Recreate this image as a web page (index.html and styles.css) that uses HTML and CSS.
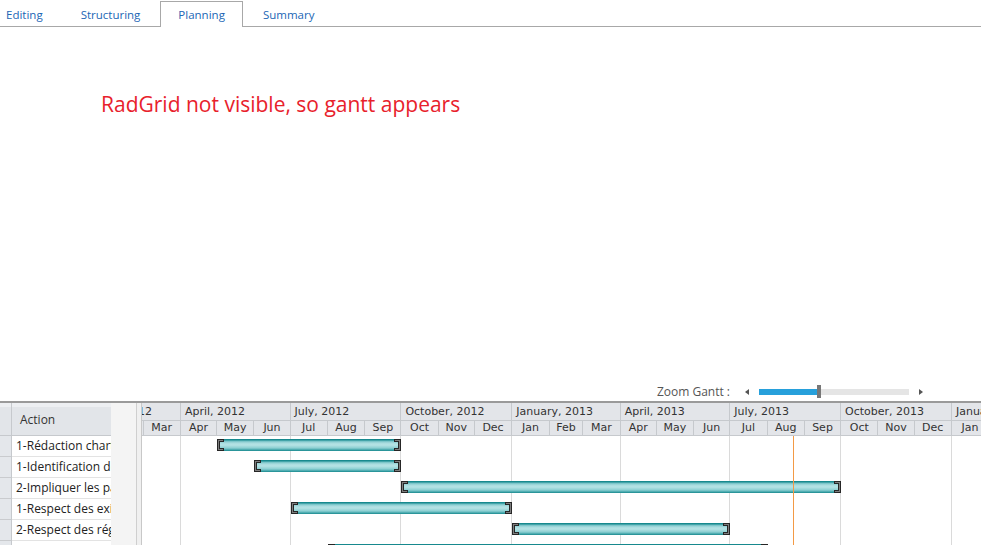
FILE: index.html
```html
<!DOCTYPE html>
<html lang="fr">
<head>
  <meta charset="UTF-8">
  <meta name="viewport" content="width=device-width, initial-scale=1.0">
  <title>Planning</title>
  <link rel="stylesheet" href="styles.css">
</head>
<body>
  <!-- Tabs -->
  <div class="tabstrip">
    <ul class="tabs">
      <li>Editing</li>
      <li>Structuring</li>
      <li class="active">Planning</li>
      <li>Summary</li>
    </ul>
  </div>

  <!-- Main Content -->
  <main class="content">
    <p class="notice">RadGrid not visible, so gantt appears</p>
  </main>

  <!-- Zoom slider -->
  <div class="zoom-bar">
    <span class="zoom-label">Zoom Gantt :</span>
    <span class="arrow arrow-left"></span>
    <div class="slider">
      <div class="slider-fill" style="width: 58px"></div>
      <div class="slider-thumb"></div>
    </div>
    <span class="arrow arrow-right"></span>
  </div>

  <!-- Gantt -->
  <div class="gantt">
    <div class="selector-col" id="selectorCol">
      <div class="grid-head"></div>
    </div>
    <div class="grid-col" id="gridCol">
      <div class="grid-head">Action</div>
    </div>
    <div class="splitter"></div>
    <div class="vscroll"></div>
    <div class="timeline">
      <div class="timeline-inner" id="timeline">
        <div class="tl-quarters" id="quarters"></div>
        <div class="tl-months" id="months"></div>
        <div class="tl-body">
          <div class="tl-cols" id="cols"></div>
          <div class="tl-rows" id="rows"></div>
          <div class="today" id="today"></div>
        </div>
      </div>
    </div>
  </div>

  <script src="gantt.js"></script>
</body>
</html>
```

FILE: styles.css
```css
* {
  box-sizing: border-box;
}
body {
  margin: 0;
  font-family: "Open Sans", "Noto Sans", sans-serif;
  background-color: #fff;
  height: 545px;
  overflow: hidden;
}

/* tabs */
.tabstrip {
  height: 27px;
  border-bottom: 1px solid #a8a8a8;
}
.tabs {
  display: flex;
  align-items: flex-end;
  list-style: none;
  margin: 0 0 0 -12px;
  padding: 0;
  height: 26px;
}
.tabs li {
  height: 26px;
  margin: 0 2px -1px 0;
  padding: 5px 17px 0;
  line-height: 16px;
  font-size: 11.5px;
  color: #2166b5;
  border: 1px solid transparent;
  border-bottom: none;
}
.tabs li.active {
  background-color: #fff;
  border-color: #a8a8a8;
}

/* content */
.content {
  height: 355px;
  padding: 63px 0 0 101px;
}
.notice {
  margin: 0;
  font-size: 21px;
  line-height: 28px;
  color: #e8212b;
}

/* zoom slider */
.zoom-bar {
  display: flex;
  justify-content: flex-end;
  align-items: center;
  height: 19px;
  padding-right: 58px;
}
.zoom-label {
  font-size: 12px;
  color: #555;
  margin-right: 15px;
}
.arrow {
  width: 0;
  height: 0;
  border-top: 3px solid transparent;
  border-bottom: 3px solid transparent;
}
.arrow-left {
  border-right: 4px solid #555;
  margin-right: 10px;
}
.arrow-right {
  border-left: 4px solid #555;
  margin-left: 10px;
}
.slider {
  display: flex;
  align-items: center;
  width: 150px;
  height: 6px;
  background-color: #e5e5e5;
}
.slider-fill {
  height: 6px;
  background-color: #27a0db;
}
.slider-thumb {
  width: 4px;
  height: 13px;
  background-color: #777;
}

/* gantt */
.gantt {
  display: flex;
  height: 150px;
  border-top: 2px solid #9a9a9a;
}
.grid-head {
  height: 33px;
  border-top: 4px solid #edeff2;
  border-bottom: 1px solid #c6c9cd;
  background-color: #e2e5e9;
}
.selector-col {
  width: 12px;
  background-color: #e4e7eb;
  border-right: 1px solid #c6c9cd;
}
.selector-col .cell {
  height: 21px;
  border-bottom: 1px solid #c9cbce;
}
.grid-col {
  width: 99px;
  overflow: hidden;
}
.grid-col .grid-head {
  padding-left: 8px;
  font-size: 12px;
  line-height: 26px;
  color: #333;
}
.grid-col .cell {
  height: 21px;
  padding-left: 4px;
  border-bottom: 1px solid #e3e3e3;
  font-size: 12px;
  line-height: 20px;
  color: #222;
  white-space: nowrap;
  overflow: hidden;
}
.splitter {
  width: 26px;
  background-color: #f4f4f4;
  border-right: 1px solid #cfcfcf;
}
.vscroll {
  width: 5px;
  background-color: #f0f0f0;
  border-right: 1px solid #c8c8c8;
}
.timeline {
  flex: 1;
  overflow: hidden;
}
.timeline-inner {
  margin-left: -70.7px;
  font-family: "DejaVu Sans", Verdana, sans-serif;
  font-size: 11px;
  color: #333;
}
.tl-quarters,
.tl-months {
  display: flex;
  background-color: #e3e5e9;
  border-bottom: 1px solid #c6c9cd;
  white-space: nowrap;
}
.tl-quarters {
  height: 18px;
}
.tl-months {
  height: 15px;
}
.tl-quarters div {
  flex: none;
  padding-left: 4px;
  line-height: 17px;
  border-right: 1px solid #c6c9cd;
  overflow: hidden;
}
.tl-months div {
  flex: none;
  text-align: center;
  line-height: 14px;
  border-right: 1px solid #c6c9cd;
  overflow: hidden;
}
.tl-body {
  display: grid;
  position: relative;
  height: 120px;
}
.tl-cols,
.tl-rows {
  grid-area: 1 / 1;
}
.tl-cols {
  display: flex;
}
.tl-cols div {
  flex: none;
  border-right: 1px solid #dadada;
}
.tl-row {
  height: 21px;
  padding-top: 3px;
}
.bar {
  position: relative;
  height: 12px;
  background: linear-gradient(to bottom, #17898e 0, #17898e 1px, #6fbfc3 2px, #a9dcdf 4px, #b6e3e5 6px, #8ccfd2 9px, #3ea3a8 11px, #17878c 12px);
}
.bar svg {
  position: absolute;
  top: 0;
}
.bar .cap-left {
  left: 0;
}
.bar .cap-right {
  right: 0;
}
.today {
  position: absolute;
  top: 0;
  bottom: 0;
  width: 1px;
  background-color: #f39a45;
}
```

FILE: gantt.js
```js
// Gantt timeline: 1 day = DAY px, counted from START
const DAY = 1.2047;
const START = Date.UTC(2012, 0, 1);
const MONTHS = ["Jan", "Feb", "Mar", "Apr", "May", "Jun", "Jul", "Aug", "Sep", "Oct", "Nov", "Dec"];
const LONG = ["January", "April", "July", "October"];

function px(y, m, d) {
  return (Date.UTC(y, m, d) - START) / 86400000 * DAY;
}

const tasks = [
  { name: "1-Rédaction charte projet", start: [2012, 4, 1], end: [2012, 9, 1] },
  { name: "1-Identification des acteurs", start: [2012, 5, 1], end: [2012, 9, 1] },
  { name: "2-Impliquer les parties prenantes", start: [2012, 9, 1], end: [2013, 9, 1] },
  { name: "1-Respect des exigences", start: [2012, 6, 1], end: [2013, 0, 1] },
  { name: "2-Respect des réglementations", start: [2013, 0, 1], end: [2013, 6, 1] },
  { name: "3-Suivi des livrables", start: [2012, 7, 1], end: [2013, 7, 1] }
];

const quarters = document.getElementById("quarters");
const months = document.getElementById("months");
const cols = document.getElementById("cols");

// header: quarters + months, Jan 2012 .. Mar 2014
for (let i = 0; i < 27; i++) {
  const y = 2012 + Math.floor(i / 12);
  const m = i % 12;
  const w = px(y, m + 1, 1) - px(y, m, 1);
  const cell = document.createElement("div");
  cell.style.width = w + "px";
  cell.textContent = MONTHS[m];
  months.appendChild(cell);

  if (m % 3 === 0) {
    const qw = px(y, m + 3, 1) - px(y, m, 1);
    const q = document.createElement("div");
    q.style.width = qw + "px";
    q.textContent = LONG[m / 3] + ", " + y;
    quarters.appendChild(q);

    const col = document.createElement("div");
    col.style.width = qw + "px";
    cols.appendChild(col);
  }
}

// bracket end caps of a bar
function cap(side) {
  const d = side === "left"
    ? "M0 0H7V3H3V9H7V12H0Z"
    : "M7 0H0V3H4V9H0V12H7Z";
  const inner = side === "left"
    ? "M1 1H6V2H2V10H6V11H1Z"
    : "M6 1H1V2H5V10H1V11H6Z";
  return `<svg class="cap-${side}" width="7" height="12" viewBox="0 0 7 12">
    <path d="${d}" fill="#262626"/><path d="${inner}" fill="#7d7d7d"/></svg>`;
}

const gridCol = document.getElementById("gridCol");
const selectorCol = document.getElementById("selectorCol");
const rows = document.getElementById("rows");

tasks.forEach(task => {
  const sel = document.createElement("div");
  sel.className = "cell";
  selectorCol.appendChild(sel);

  const name = document.createElement("div");
  name.className = "cell";
  name.textContent = task.name;
  gridCol.appendChild(name);

  const left = px(...task.start);
  const right = px(...task.end);
  const row = document.createElement("div");
  row.className = "tl-row";
  row.innerHTML = `<div class="bar" style="margin-left:${left}px;width:${right - left}px">${cap("left")}${cap("right")}</div>`;
  rows.appendChild(row);
});

// today marker, snapped to a whole pixel so it stays sharp
document.getElementById("today").style.left = Math.round(px(2013, 7, 22) - 0.7) + 0.7 + "px";
```
